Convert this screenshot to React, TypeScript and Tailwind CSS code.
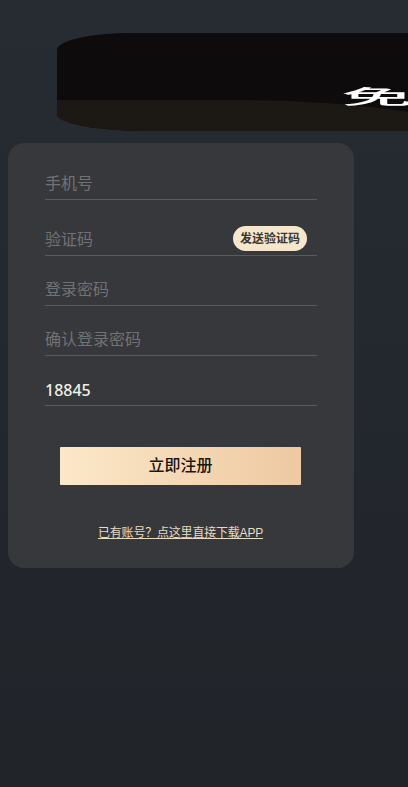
const font = { fontFamily: '"Liberation Sans", "Noto Sans CJK SC", sans-serif' };

function Field({ label, value, button, tall }: { label: string; value?: boolean; button?: boolean; tall?: boolean }) {
  return (
    <div
      className={
        (tall ? "h-[56px] " : "h-[50px] ") +
        "relative flex items-end border-b border-[#5a5b5e] pb-[3px]"
      }
    >
      <span
        style={value ? { fontFamily: '"Noto Sans", sans-serif' } : undefined}
        className={
          value
            ? "text-[16px] leading-[24px] font-medium text-[#eef2e4]"
            : "text-[16px] leading-[24px] text-[#717275]"
        }
      >
        {label}
      </span>
      {button && (
        <span className="absolute right-[10px] bottom-[4px] flex h-[25px] w-[74px] items-center justify-center rounded-full bg-[#f6e7cc] text-[12px] font-semibold text-[#3a3733]">
          发送验证码
        </span>
      )}
    </div>
  );
}

export default function App() {
  return (
    <div
      style={font}
      className="flex h-[787px] w-[408px] flex-col overflow-hidden bg-gradient-to-b from-[#272c33] via-[#23272e] to-[#212429]"
    >
      <div className="relative mt-[33px] ml-[57px] h-[98px] w-[440px] shrink-0 overflow-hidden rounded-tl-[75px_17px] rounded-bl-[90px_17px] bg-[#0d0b0c]">
        <div className="absolute top-[67px] left-0 h-[60px] w-[423px] rounded-tr-[250px_40px] bg-[#1c1915]" />
        <span className="absolute top-[53px] left-[284px] origin-top-left scale-y-[0.27] text-[72px] leading-[80px] font-medium text-white blur-[0.6px]">
          免
        </span>
      </div>
      <div className="mt-[12px] ml-[8px] h-[425px] w-[346px] rounded-[16px] bg-[#36383c] pt-[7px] pr-[37px] pl-[37px]">
        <Field label="手机号" />
        <Field label="验证码" button tall />
        <Field label="登录密码" />
        <Field label="确认登录密码" />
        <Field label="18845" value />
        <div className="mt-[41px] flex justify-center">
          <div className="-ml-[2px] flex h-[38px] w-[241px] items-center justify-center rounded-[1px] bg-gradient-to-r from-[#fbe8c8] to-[#eec9a2] pl-[1px] text-[16px] font-medium text-[#1a1512]">
            立即注册
          </div>
        </div>
        <div className="mt-[39px] -ml-[1px] text-center text-[12px] leading-[18px] tracking-[-0.2px] text-[#e8dcc0] underline">
          已有账号？点这里直接下载APP
        </div>
      </div>
    </div>
  );
}
